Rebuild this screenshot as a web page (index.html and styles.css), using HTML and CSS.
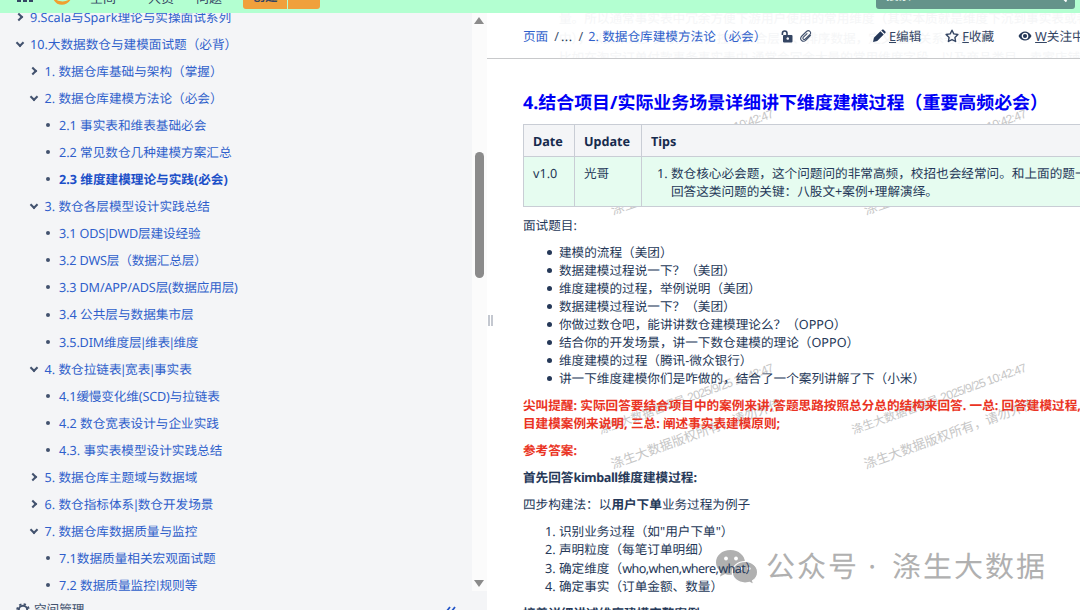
FILE: index.html
```html
<!DOCTYPE html>
<html lang="zh-CN">
<head>
    <meta charset="UTF-8">
    <meta name="viewport" content="width=device-width, initial-scale=1.0">
    <title>2.3 维度建模理论与实践(必会)</title>
    <link rel="stylesheet" href="styles.css">
</head>
<body>
<header class="header">
    <svg class="apps" width="16" height="16" viewBox="0 0 16 16" fill="#344563"><path d="M0 0h4v4H0zM6 0h4v4H6zM12 0h4v4h-4zM0 6h4v4H0zM6 6h4v4H6zM12 6h4v4h-4zM0 12h4v4H0zM6 12h4v4H6zM12 12h4v4h-4z"/></svg>
    <svg class="logo" width="22" height="22" viewBox="0 0 22 22"><path d="M1.500 13c1.500 11.500 16 11.500 19 1.500-4 5-14 6-19-1.500z" fill="#f0a030"/></svg>
    <nav class="nav">
        <span>空间</span>
        <span>人员</span>
        <span>问题</span>
    </nav>
    <div class="create">
        <span class="create-main">创建</span>
        <span class="create-more"></span>
    </div>
    <div class="search"><span>搜索</span><svg width="14" height="14" viewBox="0 0 14 14" fill="none" stroke="#fff" stroke-width="2"><circle cx="5.5" cy="5.5" r="4"/><path d="M8.5 8.5l4 4"/></svg></div>
</header>
<div class="wrap">
    <aside class="sidebar">
        <div class="tree-wrap">
            <ul class="tree">
                <li class="l1 closed">9.Scala与Spark理论与实操面试系列</li>
                <li class="l1 open">10.大数据数仓与建模面试题（必背）</li>
                <li class="l2 closed">1. 数据仓库基础与架构（掌握）</li>
                <li class="l2 open">2. 数据仓库建模方法论（必会）</li>
                <li class="l3">2.1 事实表和维表基础必会</li>
                <li class="l3">2.2 常见数仓几种建模方案汇总</li>
                <li class="l3 current">2.3 维度建模理论与实践(必会)</li>
                <li class="l2 open">3. 数仓各层模型设计实践总结</li>
                <li class="l3 caps">3.1 ODS<i class="bar">|</i>DWD层建设经验</li>
                <li class="l3 caps">3.2 DWS层（数据汇总层）</li>
                <li class="l3 caps">3.3 DM/APP/ADS层(数据应用层)</li>
                <li class="l3">3.4 公共层与数据集市层</li>
                <li class="l3 caps">3.5.DIM维度层<i class="bar">|</i>维表<i class="bar">|</i>维度</li>
                <li class="l2 open">4. 数仓拉链表<i class="bar">|</i>宽表<i class="bar">|</i>事实表</li>
                <li class="l3 caps">4.1缓慢变化维(SCD)与拉链表</li>
                <li class="l3">4.2 数仓宽表设计与企业实践</li>
                <li class="l3">4.3. 事实表模型设计实践总结</li>
                <li class="l2 closed">5. 数据仓库主题域与数据域</li>
                <li class="l2 closed">6. 数仓指标体系<i class="bar">|</i>数仓开发场景</li>
                <li class="l2 open">7. 数据仓库数据质量与监控</li>
                <li class="l3">7.1数据质量相关宏观面试题</li>
                <li class="l3">7.2 数据质量监控<i class="bar">|</i>规则等</li>
            </ul>
            <div class="scrollbar">
                <i class="arrow-up"></i>
                <i class="thumb"></i>
                <i class="arrow-down"></i>
            </div>
        </div>
        <div class="space-tools">
            <svg width="14" height="14" viewBox="0 0 14 14" fill="none" stroke="#42526e"><circle cx="7" cy="7" r="4.2" stroke-width="2"/><circle cx="7" cy="7" r="5.8" stroke-width="2" stroke-dasharray="2.3 2.25"/></svg>
            <span>空间管理</span>
            <svg class="collapse" width="11" height="11" viewBox="0 0 11 11" fill="none" stroke="#2456c7" stroke-width="1.8"><path d="M5 1L1.5 5.5 5 10M10 1L6.5 5.5 10 10"/></svg>
        </div>
    </aside>

    <main class="main">
        <div class="toolbar">
            <div class="ghost">
                <p>量。所以通常事实表中冗余方便下游用户使用的常用维度（其实本质就是维度下沉到事实表或者</p>
                <p>中），以此来减少关联查询，控制聚合层次、排序数据，定义主从关系等操作。</p>
                <p>比如在淘宝订单付款事务事实表中,通常会冗余大量的常用维度字段，以及商品类目、卖家店铺</p>
            </div>
            <div class="crumbs"><a>页面</a><span class="sep">/</span><span class="dots">...</span><span class="sep2">/</span><a>2. 数据仓库建模方法论（必会）</a></div>
            <svg class="lock" width="12" height="13" viewBox="0 0 12 13"><path d="M1.4 5V3.3a2.3 2.3 0 0 1 4.6 0V5.5" fill="none" stroke="#344563" stroke-width="1.6"/><path fill="#344563" fill-rule="evenodd" d="M3 5h7.5a1 1 0 0 1 1 1v5.5a1 1 0 0 1-1 1H3a1 1 0 0 1-1-1V6a1 1 0 0 1 1-1zM6.7 7.2a1.3 1.3 0 1 0 .1 0z"/></svg>
            <svg class="clip" width="12" height="12" viewBox="0 0 12 12" fill="none" stroke="#42526e" stroke-width="1.1"><path d="M10.8 5.2L6 10.1C4.500 11.500 2.600 11.400 1.500 10.300S.5 7.400 1.900 6L6.500 1.500c1.100-1 2.500-1 3.400-.1s.9 2.200-.1 3.200L5.300 9c-.7.600-1.500.600-2 .1s-.5-1.200.1-1.900L7.300 3.400"/></svg>
            <div class="actions">
                <span class="action"><svg width="14" height="14" viewBox="0 0 14 14" fill="#253858"><path d="M1 13l.9-4.200L8.400 2.300l3.300 3.300-6.500 6.500zM9.300 1.400l.8-.7c.5-.4 1.100-.4 1.500 0l1.800 1.800c.4.400.4 1 0 1.500l-.8.8z"/></svg><span><u>E</u>编辑</span></span>
                <span class="action"><svg width="14" height="14" viewBox="0 0 14 14" fill="none" stroke="#344563" stroke-width="1.4" stroke-linejoin="round"><path d="M7 1.200l1.800 3.700 4.100.6-3 2.900.7 4.100L7 10.600l-3.600 1.900.7-4.100-3-2.900 4.100-.6z"/></svg><span><u>F</u>收藏</span></span>
                <span class="action"><svg width="14" height="14" viewBox="0 0 14 14"><path d="M.5 7C3.500 1 10.500 1 13.500 7 10.500 13 3.500 13 .5 7z" fill="#253858"/><circle cx="7" cy="7" r="2.700" fill="none" stroke="#fff" stroke-width="1.300"/></svg><span><u>W</u>关注中</span></span>
            </div>
        </div>

        <i class="splitter"></i>

        <div class="mark mark-1"><p>涤生大数据管理员<span class="time"> 2025/9/25 10:42:47</span></p><p>涤生大数据版权所有，请勿外传</p></div>
        <div class="mark mark-2"><p>涤生大数据管理员<span class="time"> 2025/9/25 10:42:47</span></p><p>涤生大数据版权所有，请勿外传</p></div>
        <div class="mark mark-3"><p>涤生大数据管理员<span class="time"> 2025/9/25 10:42:47</span></p><p>涤生大数据版权所有，请勿外传</p></div>
        <div class="mark mark-4"><p>涤生大数据管理员<span class="time"> 2025/9/25 10:42:47</span></p><p>涤生大数据版权所有，请勿外传</p></div>

        <div class="account">
            <svg width="44" height="36" viewBox="0 0 44 36">
                <path fill="#b0b0b0" d="M15.500 1C7 1 1 6.500 1 13.500c0 4 2 7.200 5.300 9.500L5 27.500l5-2.600c2 .6 3.700.9 5.500.9C23.500 25.800 30 20.500 30 13.500S23.500 1 15.500 1z"/>
                <path fill="#b0b0b0" stroke="#fff" stroke-width="1.200" d="M30 12.500c-7.200 0-12.700 4.800-12.700 10.700S22.800 34 30 34c1.500 0 3-.3 4.500-.7l4.300 2.200-1.200-3.700c3-2 5-5.100 5-8.600 0-5.900-5.500-10.700-12.600-10.700z"/>
                <g fill="#fff"><circle cx="11" cy="9.500" r="1.900"/><circle cx="21" cy="9.500" r="1.900"/><circle cx="26" cy="19.500" r="1.600"/><circle cx="34" cy="19.500" r="1.600"/></g>
            </svg>
            <span class="account-label">公众号</span><span class="account-dot">·</span><span class="account-label">涤生大数据</span>
        </div>

        <article class="content">
            <h2>4.结合项目/实际业务场景详细讲下维度建模过程（重要高频必会）</h2>
            <table class="version">
                <tr><th class="col-date">Date</th><th class="col-update">Update</th><th>Tips</th></tr>
                <tr>
                    <td>v1.0</td>
                    <td>光哥</td>
                    <td><ol><li>数仓核心必会题，这个问题问的非常高频，校招也会经常问。和上面的题一样，<br>回答这类问题的关键：八股文+案例+理解演绎。</li></ol></td>
                </tr>
            </table>
            <p>面试题目:</p>
            <ul>
                <li>建模的流程（美团）</li>
                <li>数据建模过程说一下？（美团）</li>
                <li>维度建模的过程，举例说明（美团）</li>
                <li>数据建模过程说一下？（美团）</li>
                <li>你做过数仓吧，能讲讲数仓建模理论么？（OPPO）</li>
                <li>结合你的开发场景，讲一下数仓建模的理论（OPPO）</li>
                <li>维度建模的过程（腾讯-微众银行）</li>
                <li>讲一下维度建模你们是咋做的，结合了一个案列讲解了下（小米）</li>
            </ul>
            <p class="red">尖叫提醒: 实际回答要结合项目中的案例来讲,答题思路按照总分总的结构来回答. 一总: 回答建模过程, 二分: 结合项<br>目建模案例来说明, 三总: 阐述事实表建模原则;</p>
            <p class="red">参考答案:</p>
            <p><b>首先回答<span class="name">kimball</span>维度建模过程:</b></p>
            <p>四步构建法：以<b>用户下单</b>业务过程为例子</p>
            <ol>
                <li>识别业务过程（如"用户下单"）</li>
                <li>声明粒度（每笔订单明细）</li>
                <li>确定维度（<span class="tight">who,when,where,what</span>）</li>
                <li>确定事实（订单金额、数量）</li>
            </ol>
            <p><b>接着详细讲述维度建模完整案例</b></p>
        </article>
    </main>
</div>
</body>
</html>
```
FILE: styles.css
```css
* {
    box-sizing: border-box;
}
body {
    margin: 0;
    height: 610px;
    display: flex;
    flex-direction: column;
    overflow: hidden;
    background: #fff;
    color: #253858;
    font-family: "Noto Sans", "Noto Sans CJK SC", sans-serif;
    font-size: 12.63px;
    line-height: 18.04px;
    text-rendering: geometricPrecision;
}
p, ul, ol, h2 {
    margin: 0;
}
svg {
    display: block;
    flex: none;
}

/* header */
.header {
    flex: none;
    height: 13px;
    display: flex;
    align-items: flex-end;
    overflow: hidden;
    background: #b3ffd1;
    padding: 0 5px 0 17px;
}
.apps {
    margin-bottom: 11px;
}
.logo {
    margin: 0 0 8px 18px;
}
.nav {
    display: flex;
    gap: 32px;
    margin: 0 0 6px 17px;
    width: 153px;
    font-size: 13px;
    color: #344563;
}
.nav span:last-child {
    margin-left: -10px;
}
.create {
    display: flex;
    gap: 1px;
    height: 27px;
    margin-bottom: 4px;
    color: #344563;
    font-weight: bold;
}
.create-main {
    width: 44px;
    background: #f0a03c;
    border-radius: 3px 0 0 3px;
    text-align: center;
    line-height: 28px;
}
.create-more {
    width: 32px;
    background: #f0a03c;
    border-radius: 0 3px 3px 0;
}
.search {
    display: flex;
    justify-content: space-between;
    width: 199px;
    height: 27px;
    margin: 0 0 4px auto;
    padding: 4px 7px 0 10px;
    border-radius: 3px;
    background: #64938a;
    color: #e3f5ec;
}
.search svg {
    margin-top: 3px;
}

.wrap {
    flex: 1;
    min-height: 0;
    display: flex;
}

/* sidebar */
.sidebar {
    flex: none;
    width: 487px;
    display: flex;
    flex-direction: column;
    overflow: hidden;
    background: #f4f5f7;
}
.tree-wrap {
    flex: none;
    display: flex;
    height: 578px;
    overflow: hidden;
}
.tree {
    flex: 1;
    margin-top: -9.9px;
    padding: 0;
    list-style: none;
    color: #2f5fcb;
}
.tree li {
    display: flex;
    align-items: center;
    height: 27.08px;
    white-space: nowrap;
}
.tree li::before {
    content: "";
    flex: none;
    box-sizing: border-box;
}
.tree .caps {
    letter-spacing: -0.15px;
}
.bar {
    margin: 0 -1.7px;
    font-style: normal;
}
.l1 {
    padding-left: 15.5px;
}
.l2 {
    padding-left: 30px;
}
.l3 {
    padding-left: 46px;
}
.closed::before, .open::before {
    width: 6px;
    height: 6px;
    margin: 0 8.5px 0 0;
    border: solid #42526e;
    border-width: 0 2px 2px 0;
    transform: rotate(-45deg);
}
.open::before {
    margin: -2px 7.5px 0 1px;
    transform: rotate(45deg);
}
.l3::before {
    width: 4px;
    height: 4px;
    margin-right: 9px;
    border-radius: 50%;
    background: #42526e;
}
.current {
    font-weight: bold;
    color: #1b4fc8;
}
.scrollbar {
    flex: none;
    width: 15.5px;
    display: flex;
    flex-direction: column;
    align-items: center;
    background: #fbfbfb;
}
.arrow-up, .arrow-down {
    flex: none;
    border: 5px solid transparent;
}
.arrow-up {
    margin-top: 4px;
    border-top: 0;
    border-bottom: 7px solid #8b8b8b;
}
.arrow-down {
    margin-top: 302px;
    border-bottom: 0;
    border-top: 7px solid #8b8b8b;
}
.thumb {
    flex: none;
    width: 9px;
    height: 126px;
    margin-top: 128px;
    border-radius: 5px;
    background: #8b8b8b;
}
.space-tools {
    flex: none;
    display: flex;
    align-items: center;
    gap: 4px;
    height: 37px;
    padding: 0 31px 0 16px;
    color: #42526e;
}
.collapse {
    margin: 4px 0 0 auto;
}

/* main column */
.main {
    flex: 1;
    min-width: 0;
    position: relative;
    overflow: hidden;
}
.toolbar {
    position: relative;
    display: flex;
    align-items: center;
    height: 46px;
    padding: 1px 0 0 36px;
    border-bottom: 1px solid #c8c9cb;
    white-space: nowrap;
    overflow: hidden;
}
.ghost {
    position: absolute;
    left: 72px;
    top: -4px;
    line-height: 19.5px;
    color: #f5f6f7;
}
.crumbs {
    position: relative;
    display: flex;
    width: 258px;
    color: #42526e;
}
.crumbs a {
    color: #2f5fcb;
}
.sep {
    margin-left: 6px;
}
.dots {
    margin-left: 2px;
    letter-spacing: 0.5px;
    color: #253858;
}
.sep2 {
    margin: 0 5px 0 6px;
}
.lock, .clip, .actions {
    position: relative;
}
.clip {
    margin-left: 7px;
}
.actions {
    display: flex;
    gap: 24px;
    margin-left: 60px;
    color: #344563;
}
.action {
    display: flex;
    align-items: center;
    gap: 3px;
}
.lock, .clip, .crumbs, .actions {
    flex: none;
}
.splitter {
    position: absolute;
    left: 1px;
    top: 302px;
    width: 5px;
    height: 11px;
    border: solid #c4c8d0;
    border-width: 0 2px;
}

/* watermarks lie under the article */
.mark {
    position: absolute;
    transform: rotate(-20deg);
    transform-origin: 0 0;
    white-space: nowrap;
    color: #c6c6c6;
    font-size: 12.9px;
}
.mark p:first-child {
    font-size: 11.5px;
}
.mark .time {
    font-family: "Liberation Sans", Arial, sans-serif;
    font-size: 12px;
    letter-spacing: -0.75px;
}
.mark p + p {
    margin-top: 17px;
}
.mark-1 {
    left: 109px;
    top: 155px;
}
.mark-2 {
    left: 362px;
    top: 155px;
}
.mark-3 {
    left: 109px;
    top: 409px;
}
.mark-4 {
    left: 362px;
    top: 409px;
}
.account {
    position: absolute;
    left: 228px;
    top: 534px;
    display: flex;
    align-items: center;
    color: #b0b0b0;
    font-size: 29px;
    line-height: 40px;
    white-space: nowrap;
}
.account-label {
    margin-left: 7px;
    letter-spacing: 2px;
}
.account-dot {
    width: 26px;
    text-align: center;
}

/* article */
.content {
    position: relative;
    width: 700px;
    padding: 33px 0 0 36px;
}
.content h2 {
    color: #0000f5;
    font-size: 17.95px;
    line-height: 22px;
    margin-bottom: 9.5px;
    white-space: nowrap;
}
.content > p, .content > ul, .content > ol {
    margin-top: 9.02px;
    white-space: nowrap;
}
.content ul, .content ol {
    padding-left: 36px;
}
.content ul {
    list-style: none;
}
.content ul li::before {
    content: "";
    display: inline-block;
    width: 5px;
    height: 5px;
    margin: 0 7.5px 2px -12.5px;
    border-radius: 50%;
    background: #253858;
}
.content .red {
    color: #ea3323;
    font-weight: bold;
}
.tight {
    letter-spacing: -0.6px;
}
.name {
    letter-spacing: -0.4px;
}
.version {
    width: 664px;
    border-collapse: collapse;
    table-layout: fixed;
}
.version th, .version td {
    border: 1px solid #c9cdd5;
    padding: 7px 9px 6px;
    text-align: left;
    vertical-align: top;
}
.version th {
    background: #f4f5f7;
    color: #172b4d;
}
.version td {
    height: 50px;
    background: #e6fcf0;
}
.col-date {
    width: 51px;
}
.col-update {
    width: 67px;
}
.content .version ol {
    padding-left: 20px;
    white-space: nowrap;
}
```
